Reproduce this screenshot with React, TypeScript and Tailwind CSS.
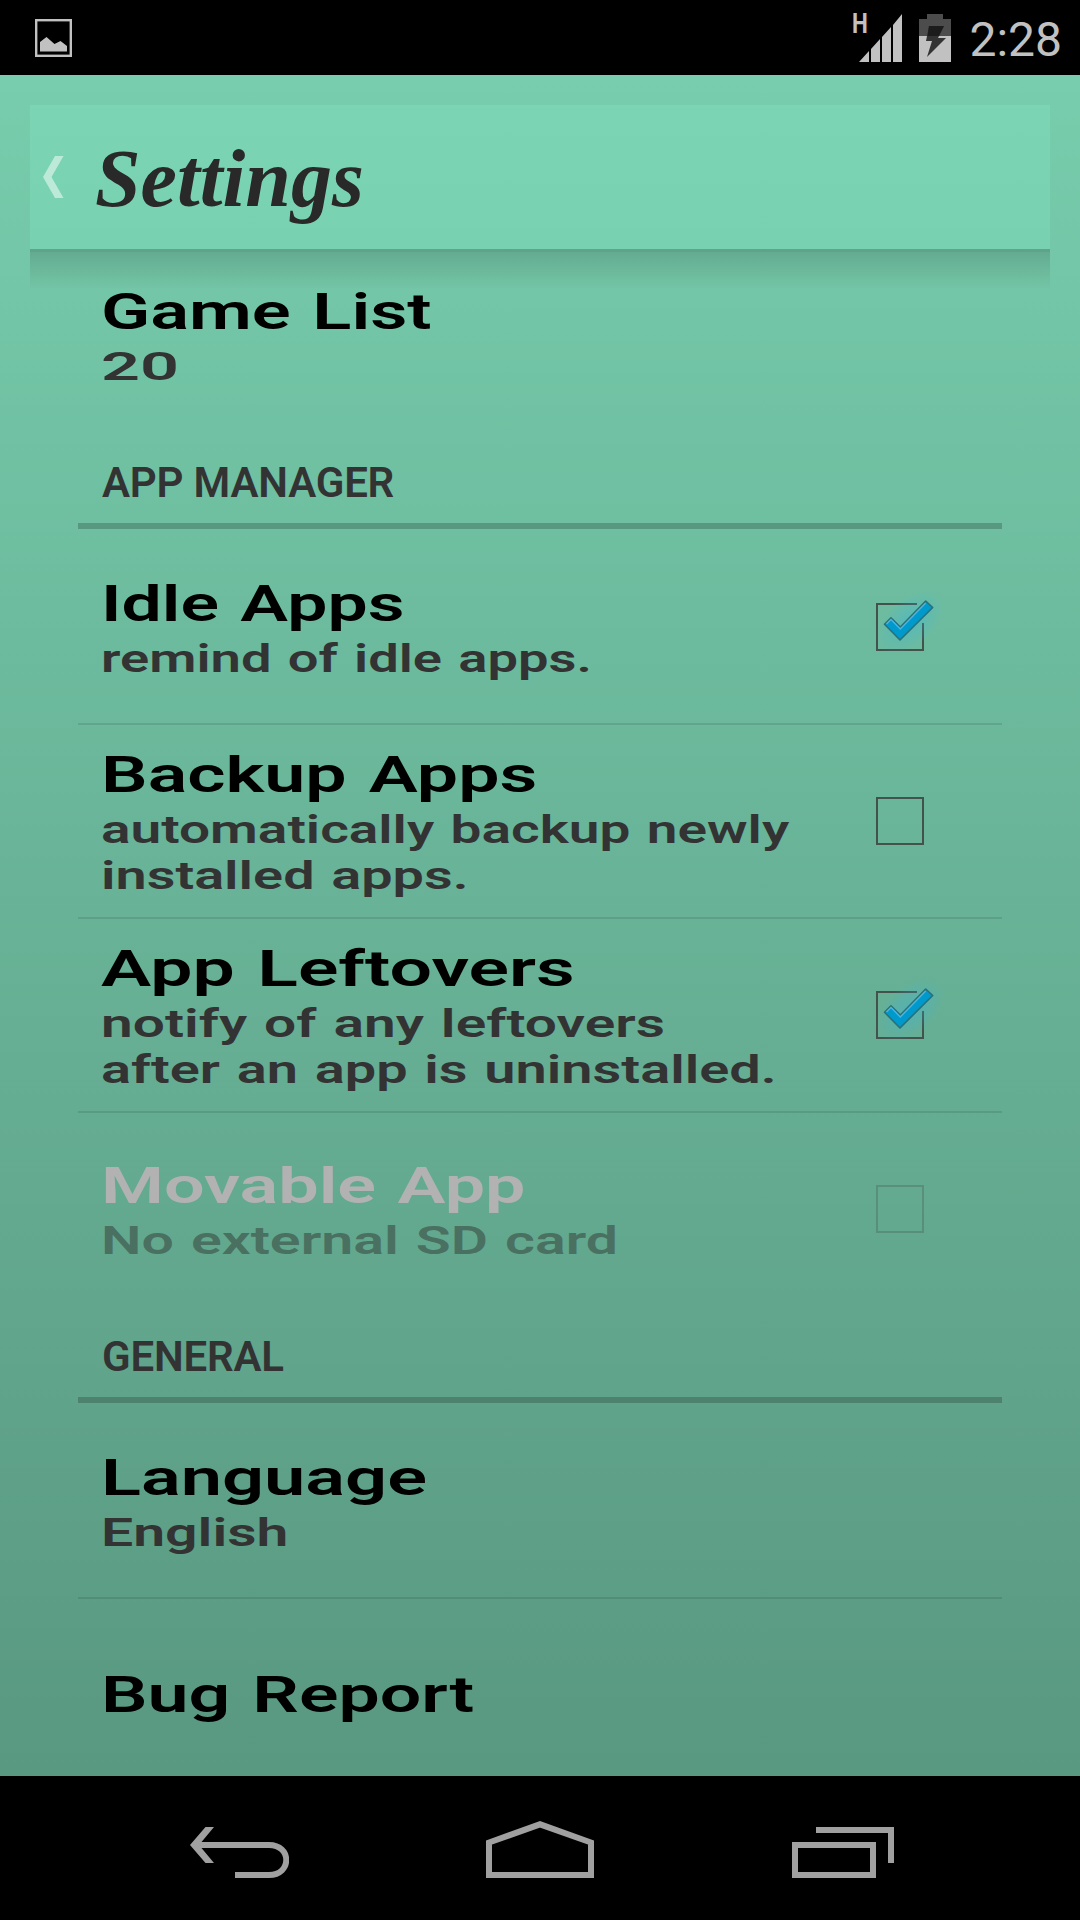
import React, { useLayoutEffect, useRef, useState } from 'react';

type Line = { text: string; width: number };

type Item = {
  title: Line;
  summary?: Line[];
  checked?: boolean;
  disabled?: boolean;
};

const appManager: Item[] = [
  {
    title: { text: 'Idle Apps', width: 304 },
    summary: [{ text: 'remind of idle apps.', width: 491 }],
    checked: true,
  },
  {
    title: { text: 'Backup Apps', width: 436 },
    summary: [
      { text: 'automatically backup newly', width: 688 },
      { text: 'installed apps.', width: 367 },
    ],
    checked: false,
  },
  {
    title: { text: 'App Leftovers', width: 474 },
    summary: [
      { text: 'notify of any leftovers', width: 564 },
      { text: 'after an app is uninstalled.', width: 676 },
    ],
    checked: true,
  },
  {
    title: { text: 'Movable App', width: 425 },
    summary: [{ text: 'No external SD card', width: 517 }],
    checked: false,
    disabled: true,
  },
];

const general: Item[] = [
  {
    title: { text: 'Language', width: 326 },
    summary: [{ text: 'English', width: 187 }],
  },
  { title: { text: 'Bug Report', width: 373 } },
];

/* Extended lettering: stretches a line horizontally to the given width */
const Wide: React.FC<{ line: Line; className: string }> = ({ line, className }) => {
  const ref = useRef<HTMLSpanElement>(null);
  const [scale, setScale] = useState(1.4);

  useLayoutEffect(() => {
    if (ref.current) setScale(line.width / ref.current.offsetWidth);
  }, [line.width]);

  return (
    <div className={className}>
      <span
        ref={ref}
        className="inline-block origin-left whitespace-nowrap [word-spacing:0.05em]"
        style={{ transform: `scaleX(${scale})` }}
      >
        {line.text}
      </span>
    </div>
  );
};

const Checkbox: React.FC<{ checked: boolean; disabled?: boolean }> = ({ checked, disabled }) => (
  <svg className={`w-24 h-24 shrink-0 ${disabled ? 'opacity-30' : ''}`} viewBox="0 0 96 96" fill="none">
    <defs>
      <radialGradient id="glow">
        <stop offset="0" stopColor="#33b5e5" stopOpacity="0.4" />
        <stop offset="0.5" stopColor="#33b5e5" stopOpacity="0.22" />
        <stop offset="1" stopColor="#33b5e5" stopOpacity="0" />
      </radialGradient>
    </defs>
    {checked ? (
      <>
        <path d="M65 25H25V71H71V44" stroke="#44524d" strokeWidth="2" />
        <ellipse cx="58" cy="43" rx="40" ry="24" fill="url(#glow)" transform="rotate(-40 58 43)" />
        <path
          d="M32.5 45.3L39 38.8L48.3 48L73.7 22L80.7 28.5L48 61Z"
          fill="#0099cc"
          stroke="#2c6f74"
          strokeWidth="1.6"
          strokeLinejoin="round"
        />
        <path d="M34.5 45L39 40.5L48.3 50L73.7 24" stroke="#4db4df" strokeWidth="1.4" />
      </>
    ) : (
      <rect x="25" y="25" width="46" height="46" stroke="#44524d" strokeWidth="2" />
    )}
  </svg>
);

const Row: React.FC<{ item: Item }> = ({ item }) => (
  <div className="h-48 shrink-0 pl-[23px] pr-[54px] flex items-center justify-between">
    <div className="font-semibold">
      <Wide
        line={item.title}
        className={`text-[50.6px] leading-[64px] ${item.disabled ? 'text-[#b2b2b2]' : 'text-black'}`}
      />
      {item.summary?.map((line) => (
        <Wide
          key={line.text}
          line={line}
          className={`text-[39.4px] leading-[46px] ${item.disabled ? 'text-[#4a7062]' : 'text-[#333333]'}`}
        />
      ))}
    </div>
    {item.checked !== undefined && <Checkbox checked={item.checked} disabled={item.disabled} />}
  </div>
);

const Section: React.FC<{ name: string; items: Item[] }> = ({ name, items }) => (
  <>
    <div className="h-[98px] shrink-0 border-b-[6px] border-black/20 pl-6 pt-[26px]">
      <h2 className="text-[42px] leading-[52px] font-semibold tracking-[-0.2px] text-[#333333]">{name}</h2>
    </div>
    <div className="shrink-0 pt-0.5">
      {items.map((item, i) => (
        <React.Fragment key={item.title.text}>
          {i > 0 && <div className="h-0.5 bg-black/10" />}
          <Row item={item} />
        </React.Fragment>
      ))}
    </div>
  </>
);

const StatusBar: React.FC = () => (
  <div className="h-[75px] shrink-0 bg-black pl-[35px] pr-[18px] flex items-center justify-between text-[#c1c1c1]">
    <svg className="w-[37px] h-[38px]" viewBox="0 0 37 38">
      <rect x="1.2" y="1.2" width="34.6" height="35.6" fill="none" stroke="currentColor" strokeWidth="2.4" />
      <path d="M5 23L11.500 18L19.500 25L25.500 22L32 27V32.500H5Z" fill="currentColor" />
    </svg>
    <div className="flex items-center">
      <span className="self-start -mt-0.5 w-[17px] text-[28px] leading-[28px] font-bold scale-x-80 origin-left">H</span>
      <svg className="w-[50px] h-12 -ml-2.5" viewBox="0 0 50 48" fill="currentColor">
        <path d="M0 48L10 37V48ZM12 35L21 25V48H12ZM23 23L32 13V48H23ZM34 11L43 0V48H34Z" />
      </svg>
      <svg className="w-8 h-12 ml-2.5" viewBox="0 0 32 48">
        <path d="M8 0H24V5H32V22H0V5H8Z" fill="#4c4c4c" />
        <path d="M0 22H32V48H0Z" fill="#c1c1c1" />
        <path d="M10 12H25L19 24H27L8 43L13 27H7Z" fill="#333333" />
        <path d="M10 12H25L20 22H8.500Z" fill="#1c1c1c" />
      </svg>
      <span className="ml-[18px] text-5xl leading-[48px] mt-1">2:28</span>
    </div>
  </div>
);

const NavBar: React.FC = () => (
  <div className="h-36 shrink-0 bg-black pl-[190px] pt-[45px] flex">
    <svg className="w-[99px] h-[57px]" viewBox="0 0 99 57" fill="none">
      <path d="M6 24H79C102 24 102 54 79 54H45" stroke="#a0a0a0" strokeWidth="6" />
      <path d="M15.500 6H24L9 24L24 42H15.500L0 24Z" fill="#a0a0a0" />
    </svg>
    <svg className="w-[108px] h-[57px] ml-[197px]" viewBox="0 0 108 57" fill="none">
      <path d="M3 54V21.500L54 3.300L105 21.500V54Z" stroke="#a0a0a0" strokeWidth="6" />
    </svg>
    <svg className="w-[102px] h-[57px] ml-[198px]" viewBox="0 0 102 57" fill="none">
      <path d="M24 9H99V42M3 24H81V54H3Z" stroke="#a0a0a0" strokeWidth="6" />
    </svg>
  </div>
);

const App: React.FC = () => {
  return (
    <div className="w-[1080px] h-[1920px] overflow-hidden flex flex-col font-['Roboto',sans-serif] select-none">
      <StatusBar />

      <div className="h-[1701px] shrink-0 overflow-hidden bg-linear-to-b from-[#77cdad] to-[#599881] px-[30px] pt-[30px] flex flex-col">
        {/* Action bar */}
        <div className="h-36 shrink-0 bg-linear-to-b from-[#7bd5b4] to-[#78d1b1] flex items-center">
          <svg className="w-[21px] h-[42px] ml-[13px]" viewBox="0 0 21 42">
            <path d="M12 0H20.500L8.500 21L20.500 42H12L0 21Z" fill="#bde9d9" />
          </svg>
          <h1 className="ml-[31px] mt-1 text-[82px] leading-[100px] font-bold italic font-['Liberation_Serif',serif] text-[#292929]">
            Settings
          </h1>
        </div>
        <div className="h-[3px] shrink-0 bg-black/18" />
        <div className="h-[38px] -mb-[51px] shrink-0 bg-linear-to-b from-black/14 to-transparent" />

        {/* Preference list, scrolled under the action bar */}
        <div className="px-12 flex flex-col">
          <Row item={{ title: { text: 'Game List', width: 330 }, summary: [{ text: '20', width: 78 }] }} />
          <Section name="APP MANAGER" items={appManager} />
          <Section name="GENERAL" items={general} />
        </div>
      </div>

      <NavBar />
    </div>
  );
};

export default App;
